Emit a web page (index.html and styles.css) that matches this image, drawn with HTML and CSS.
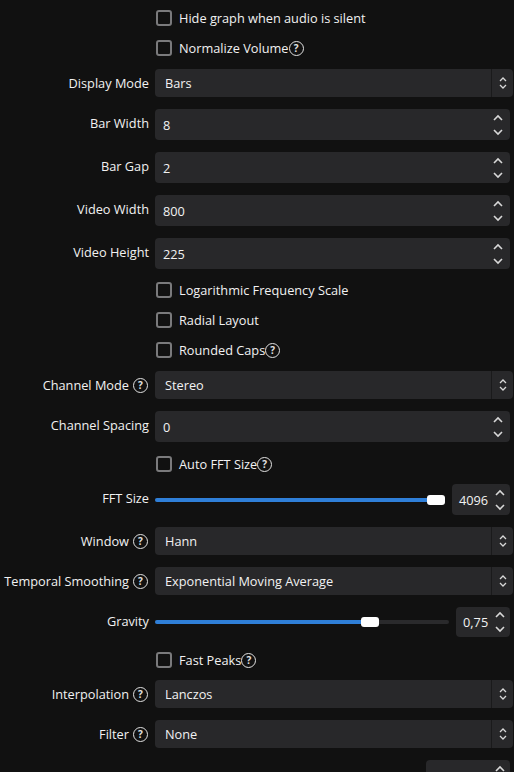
FILE: index.html
```html
<!DOCTYPE html>
<html>
<head>
<meta charset="utf-8">
<link rel="stylesheet" href="styles.css">
</head>
<body>
<div class="form">
  <div></div>
  <div class="check"><span class="box"></span><span>Hide graph when audio is silent</span></div>

  <div></div>
  <div class="check"><span class="box"></span><span>Normalize Volume</span><span class="help">?</span></div>

  <div class="lbl">Display Mode</div>
  <div class="combo"><span class="val">Bars</span><span class="carrow"><svg width="8" height="14" viewBox="0 0 8 14"><polyline points="1,5 4,2 7,5"/><polyline points="1,9 4,12 7,9"/></svg></span></div>

  <div class="lbl">Bar Width</div>
  <div class="spin"><span class="val">8</span><span class="sarrow"><svg width="12" height="26" viewBox="0 0 12 26"><polyline points="2,8 6,4 10,8"/><polyline points="2,18 6,22 10,18"/></svg></span></div>

  <div class="lbl">Bar Gap</div>
  <div class="spin"><span class="val">2</span><span class="sarrow"><svg width="12" height="26" viewBox="0 0 12 26"><polyline points="2,8 6,4 10,8"/><polyline points="2,18 6,22 10,18"/></svg></span></div>

  <div class="lbl">Video Width</div>
  <div class="spin"><span class="val">800</span><span class="sarrow"><svg width="12" height="26" viewBox="0 0 12 26"><polyline points="2,8 6,4 10,8"/><polyline points="2,18 6,22 10,18"/></svg></span></div>

  <div class="lbl">Video Height</div>
  <div class="spin"><span class="val">225</span><span class="sarrow"><svg width="12" height="26" viewBox="0 0 12 26"><polyline points="2,8 6,4 10,8"/><polyline points="2,18 6,22 10,18"/></svg></span></div>

  <div></div>
  <div class="check"><span class="box"></span><span>Logarithmic Frequency Scale</span></div>

  <div></div>
  <div class="check"><span class="box"></span><span>Radial Layout</span></div>

  <div></div>
  <div class="check"><span class="box"></span><span>Rounded Caps</span><span class="help">?</span></div>

  <div class="lbl">Channel Mode <span class="help gap">?</span></div>
  <div class="combo"><span class="val">Stereo</span><span class="carrow"><svg width="8" height="14" viewBox="0 0 8 14"><polyline points="1,5 4,2 7,5"/><polyline points="1,9 4,12 7,9"/></svg></span></div>

  <div class="lbl">Channel Spacing</div>
  <div class="spin"><span class="val">0</span><span class="sarrow"><svg width="12" height="26" viewBox="0 0 12 26"><polyline points="2,8 6,4 10,8"/><polyline points="2,18 6,22 10,18"/></svg></span></div>

  <div></div>
  <div class="check auto"><span class="box"></span><span>Auto FFT Size</span><span class="help">?</span></div>

  <div class="lbl">FFT Size</div>
  <div class="slider-row">
    <div class="track"><div class="fill" style="width: 100%"></div><div class="handle" style="left: calc(100% - 18px)"></div></div>
    <div class="spin small w58"><span class="val">4096</span><span class="sarrow"><svg width="12" height="26" viewBox="0 0 12 26"><polyline points="2,8 6,4 10,8"/><polyline points="2,18 6,22 10,18"/></svg></span></div>
  </div>

  <div class="lbl">Window <span class="help gap">?</span></div>
  <div class="combo"><span class="val">Hann</span><span class="carrow"><svg width="8" height="14" viewBox="0 0 8 14"><polyline points="1,5 4,2 7,5"/><polyline points="1,9 4,12 7,9"/></svg></span></div>

  <div class="lbl">Temporal Smoothing <span class="help gap">?</span></div>
  <div class="combo"><span class="val">Exponential Moving Average</span><span class="carrow"><svg width="8" height="14" viewBox="0 0 8 14"><polyline points="1,5 4,2 7,5"/><polyline points="1,9 4,12 7,9"/></svg></span></div>

  <div class="lbl">Gravity</div>
  <div class="slider-row">
    <div class="track"><div class="fill" style="width: 73%"></div><div class="handle" style="left: calc(73% - 9px)"></div></div>
    <div class="spin small w54 h30"><span class="val">0,75</span><span class="sarrow"><svg width="12" height="26" viewBox="0 0 12 26"><polyline points="2,8 6,4 10,8"/><polyline points="2,18 6,22 10,18"/></svg></span></div>
  </div>

  <div></div>
  <div class="check peaks"><span class="box"></span><span>Fast Peaks</span><span class="help">?</span></div>

  <div class="lbl">Interpolation <span class="help gap">?</span></div>
  <div class="combo"><span class="val">Lanczos</span><span class="carrow"><svg width="8" height="14" viewBox="0 0 8 14"><polyline points="1,5 4,2 7,5"/><polyline points="1,9 4,12 7,9"/></svg></span></div>

  <div class="lbl">Filter <span class="help gap">?</span></div>
  <div class="combo"><span class="val">None</span><span class="carrow"><svg width="8" height="14" viewBox="0 0 8 14"><polyline points="1,5 4,2 7,5"/><polyline points="1,9 4,12 7,9"/></svg></span></div>

  <div class="lbl"></div>
  <div class="slider-row">
    <div class="track empty"></div>
    <div class="spin small w84"><span class="val"></span><span class="sarrow"><svg width="12" height="26" viewBox="0 0 12 26"><polyline points="2,8 6,4 10,8"/><polyline points="2,18 6,22 10,18"/></svg></span></div>
  </div>
</div>
</body>
</html>
```
FILE: styles.css
```css
html, body {
  margin: 0;
  padding: 0;
  background: #111111;
  overflow: hidden;
}
body {
  font-family: "Open Sans", "Noto Sans", sans-serif;
  font-size: 12.75px;
  color: #f2f2f2;
  width: 514px;
  height: 772px;
}
.form {
  display: grid;
  grid-template-columns: 149px 358px;
  column-gap: 6px;
  row-gap: 12px;
  padding-top: 9px;
}
.lbl {
  display: flex;
  align-items: center;
  justify-content: flex-end;
  align-self: start;
  height: 18px;
  margin-top: 5px;
  white-space: nowrap;
}
.check {
  display: flex;
  align-items: center;
  height: 18px;
  white-space: nowrap;
}
.check.auto { margin-top: 1px; margin-bottom: -1px; }
.check.peaks { margin-top: 2px; margin-bottom: -1px; }
.box {
  box-sizing: border-box;
  width: 16px;
  height: 16px;
  border: 2px solid #7a7a7c;
  border-radius: 3px;
  margin-left: 1px;
  margin-right: 7px;
  flex: none;
}
.help {
  box-sizing: border-box;
  display: inline-flex;
  align-items: center;
  justify-content: center;
  width: 15px;
  height: 15px;
  border: 1.6px solid #e2e2e2;
  border-radius: 50%;
  font-size: 10px;
  font-weight: 700;
  line-height: 1;
  color: #e2e2e2;
  flex: none;
}
.help.gap { margin-left: 4px; margin-right: 1px; }
.combo, .spin {
  box-sizing: border-box;
  background: #28282a;
  border-radius: 4px;
  display: flex;
  align-items: center;
  white-space: nowrap;
}
.combo {
  height: 28px;
  width: 358px;
}
.combo .val {
  flex: 1;
  padding-left: 10px;
}
.carrow {
  width: 21px;
  height: 28px;
  border-left: 1px solid #1a1a1b;
  display: flex;
  align-items: center;
  justify-content: center;
}
.carrow svg polyline, .sarrow svg polyline {
  fill: none;
  stroke: #d8d8d8;
  stroke-width: 1.3;
}
.sarrow svg polyline { stroke-width: 1.6; }
.spin {
  height: 31px;
  width: 355px;
}
.spin.h30 { height: 30px; }
.spin .val {
  flex: 1;
  padding-left: 8px;
}
.sarrow {
  width: 24px;
  height: 31px;
  display: flex;
  align-items: center;
  justify-content: center;
}
.spin.small .val {
  padding-left: 7px;
  padding-right: 0;
  text-align: left;
}
.spin.small .sarrow { width: 20px; }
.w58 { width: 58px; flex: none; }
.w54 { width: 54px; flex: none; }
.w84 { width: 84px; flex: none; }
.slider-row {
  display: flex;
  align-items: center;
  gap: 7px;
  width: 355px;
}
.track {
  position: relative;
  flex: 1;
  height: 4px;
  background: #2a2a2c;
  border-radius: 2px;
}
.track.empty { background: transparent; }
.fill {
  height: 4px;
  background: #2f7fd8;
  border-radius: 2px;
}
.handle {
  position: absolute;
  top: -3px;
  width: 18px;
  height: 10px;
  background: #ffffff;
  border-radius: 3px;
}
```
